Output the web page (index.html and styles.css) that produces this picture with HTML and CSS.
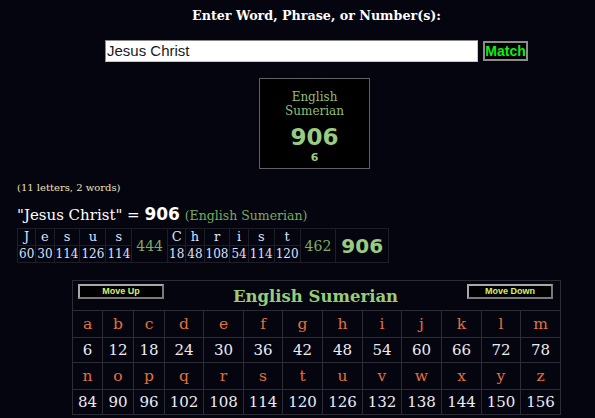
FILE: index.html
```html
<!DOCTYPE html>
<html>
<head>
<meta charset="utf-8">
<link rel="stylesheet" href="styles.css">
</head>
<body>
<div class="center-block">
  <div class="prompt">Enter Word, Phrase, or Number(s):</div>
  <div class="search-row">
    <div class="search-input">Jesus Christ</div>
    <div class="match-btn">Match</div>
  </div>
  <div class="result-box">
    <div class="cipher-name">English<br>Sumerian</div>
    <div class="cipher-total">906</div>
    <div class="cipher-root">6</div>
  </div>
</div>

<div class="summary">
  <div class="counts">(11 letters, 2 words)</div>
  <div class="equation">"Jesus Christ" = <span class="eq-num">906</span> <span class="eq-name">(English Sumerian)</span></div>
  <table class="breakdown">
    <tr class="b-letters">
      <td>J</td><td>e</td><td>s</td><td>u</td><td>s</td>
      <td rowspan="2" class="word-sum">444</td>
      <td>C</td><td>h</td><td>r</td><td>i</td><td>s</td><td>t</td>
      <td rowspan="2" class="word-sum">462</td>
      <td rowspan="2" class="grand-sum">906</td>
    </tr>
    <tr class="b-values">
      <td>60</td><td>30</td><td>114</td><td>126</td><td>114</td>
      <td>18</td><td>48</td><td>108</td><td>54</td><td>114</td><td>120</td>
    </tr>
  </table>
</div>

<div class="chart-wrap">
  <table class="chart">
    <colgroup>
      <col class="c30"><col class="c31"><col class="c31"><col class="c39"><col class="c40"><col class="c39"><col class="c40"><col class="c40"><col class="c39"><col class="c40"><col class="c40"><col class="c39"><col class="c40">
    </colgroup>
    <tr>
      <th colspan="13" class="chart-head">
        <div class="head-row">
          <div class="move-btn">Move Up</div>
          <div class="chart-title">English Sumerian</div>
          <div class="move-btn">Move Down</div>
        </div>
      </th>
    </tr>
    <tr class="letters">
      <td>a</td><td>b</td><td>c</td><td>d</td><td>e</td><td>f</td><td>g</td><td>h</td><td>i</td><td>j</td><td>k</td><td>l</td><td>m</td>
    </tr>
    <tr class="values">
      <td>6</td><td>12</td><td>18</td><td>24</td><td>30</td><td>36</td><td>42</td><td>48</td><td>54</td><td>60</td><td>66</td><td>72</td><td>78</td>
    </tr>
    <tr class="letters">
      <td>n</td><td>o</td><td>p</td><td>q</td><td>r</td><td>s</td><td>t</td><td>u</td><td>v</td><td>w</td><td>x</td><td>y</td><td>z</td>
    </tr>
    <tr class="values">
      <td>84</td><td>90</td><td>96</td><td>102</td><td>108</td><td>114</td><td>120</td><td>126</td><td>132</td><td>138</td><td>144</td><td>150</td><td>156</td>
    </tr>
  </table>
</div>
</body>
</html>
```

FILE: styles.css
```css
html, body {
  margin: 0;
  padding: 0;
  background: #05050f;
  overflow: hidden;
}
body {
  width: 595px;
  height: 418px;
  font-family: "DejaVu Serif", "Liberation Serif", serif;
  color: #ffffff;
}
.center-block {
  padding-left: 38px;
  display: flex;
  flex-direction: column;
  align-items: center;
}
.prompt {
  margin-top: 8px;
  font-weight: bold;
  font-size: 12.7px;
  line-height: 16px;
  color: #ffffff;
}
.search-row {
  margin-top: 16px;
  display: flex;
  align-items: center;
  gap: 5px;
}
.search-input {
  width: 370px;
  height: 20px;
  background: #ffffff;
  border: 1px solid #8a8a8a;
  border-right-color: #c8c8c8;
  border-bottom-color: #c8c8c8;
  font-family: "Liberation Sans", Arial, sans-serif;
  font-size: 15px;
  line-height: 20px;
  color: #1a1a1a;
  padding-left: 1px;
}
.match-btn {
  width: 41px;
  height: 16px;
  background: #000000;
  border: 2px solid #8c8c8c;
  font-family: "Liberation Sans", Arial, sans-serif;
  font-weight: bold;
  font-size: 14px;
  line-height: 16px;
  text-align: center;
  color: #11ee11;
}
.result-box {
  margin-top: 16px;
  margin-left: -4px;
  width: 111px;
  height: 91px;
  background: #000000;
  border: 1px solid #606060;
  text-align: center;
  box-sizing: border-box;
  padding-top: 11px;
}
.cipher-name {
  font-size: 12px;
  line-height: 14px;
  color: #8fbf72;
}
.cipher-total {
  font-family: "DejaVu Sans", Verdana, sans-serif;
  font-weight: bold;
  font-size: 23px;
  line-height: 26px;
  margin-top: 6px;
  color: #99cc80;
}
.cipher-root {
  font-family: "DejaVu Sans", Verdana, sans-serif;
  font-weight: bold;
  font-size: 11px;
  line-height: 13px;
  margin-top: 1px;
  color: #99cc80;
}
.summary {
  padding-left: 17px;
  margin-top: 12px;
}
.counts {
  font-size: 10px;
  line-height: 14px;
  color: #efe0bd;
}
.equation {
  margin-top: 10px;
  font-size: 15px;
  line-height: 18px;
  color: #ffffff;
}
.eq-num {
  font-family: "DejaVu Sans", Verdana, sans-serif;
  font-weight: bold;
  font-size: 17px;
}
.eq-name {
  font-size: 12.5px;
  color: #77aa5e;
}
.breakdown {
  border-collapse: collapse;
  margin-top: 3px;
}
.breakdown td {
  border: 1px solid #1e1e26;
  text-align: center;
  padding: 0 1px;
  color: #d8e2ff;
}
.b-letters td {
  font-size: 13px;
  line-height: 16px;
  height: 16px;
}
.b-values td {
  font-size: 12px;
  line-height: 16px;
  height: 16px;
}
.breakdown td.word-sum {
  font-size: 14px;
  color: #7cae5e;
  padding: 0 4px;
}
.breakdown td.grand-sum {
  font-family: "DejaVu Sans", Verdana, sans-serif;
  font-weight: bold;
  font-size: 20px;
  color: #99cc80;
  padding: 0 5px;
}
.chart-wrap {
  margin-top: 17px;
  padding-left: 72px;
}
.chart {
  border-collapse: collapse;
  table-layout: fixed;
  width: 489px;
  border: 1px solid #2c2c34;
}
.c30 { width: 30px; }
.c31 { width: 31px; }
.c39 { width: 39px; }
.c40 { width: 40px; }
.chart td, .chart th {
  border: 1px solid #2c2c34;
  padding: 0;
  text-align: center;
}
.chart-head {
  height: 29px;
  vertical-align: top;
}
.head-row {
  display: flex;
  justify-content: space-between;
  align-items: flex-start;
  padding: 3px 7px 0 5px;
}
.move-btn {
  width: 82px;
  height: 11px;
  background: #000000;
  border: 2px solid #a8a8a8;
  border-right-color: #7a7a7a;
  border-bottom-color: #7a7a7a;
  font-family: "Liberation Sans", Arial, sans-serif;
  font-weight: bold;
  font-size: 9px;
  line-height: 11px;
  color: #d8f06a;
  text-align: center;
}
.chart-title {
  margin-top: 2px;
  font-weight: bold;
  font-size: 16.5px;
  line-height: 22px;
  color: #99cc77;
}
.letters td {
  height: 26px;
  font-size: 15.5px;
  color: #e0703c;
}
.values td {
  height: 24px;
  font-size: 15px;
  color: #ececf4;
}
```
